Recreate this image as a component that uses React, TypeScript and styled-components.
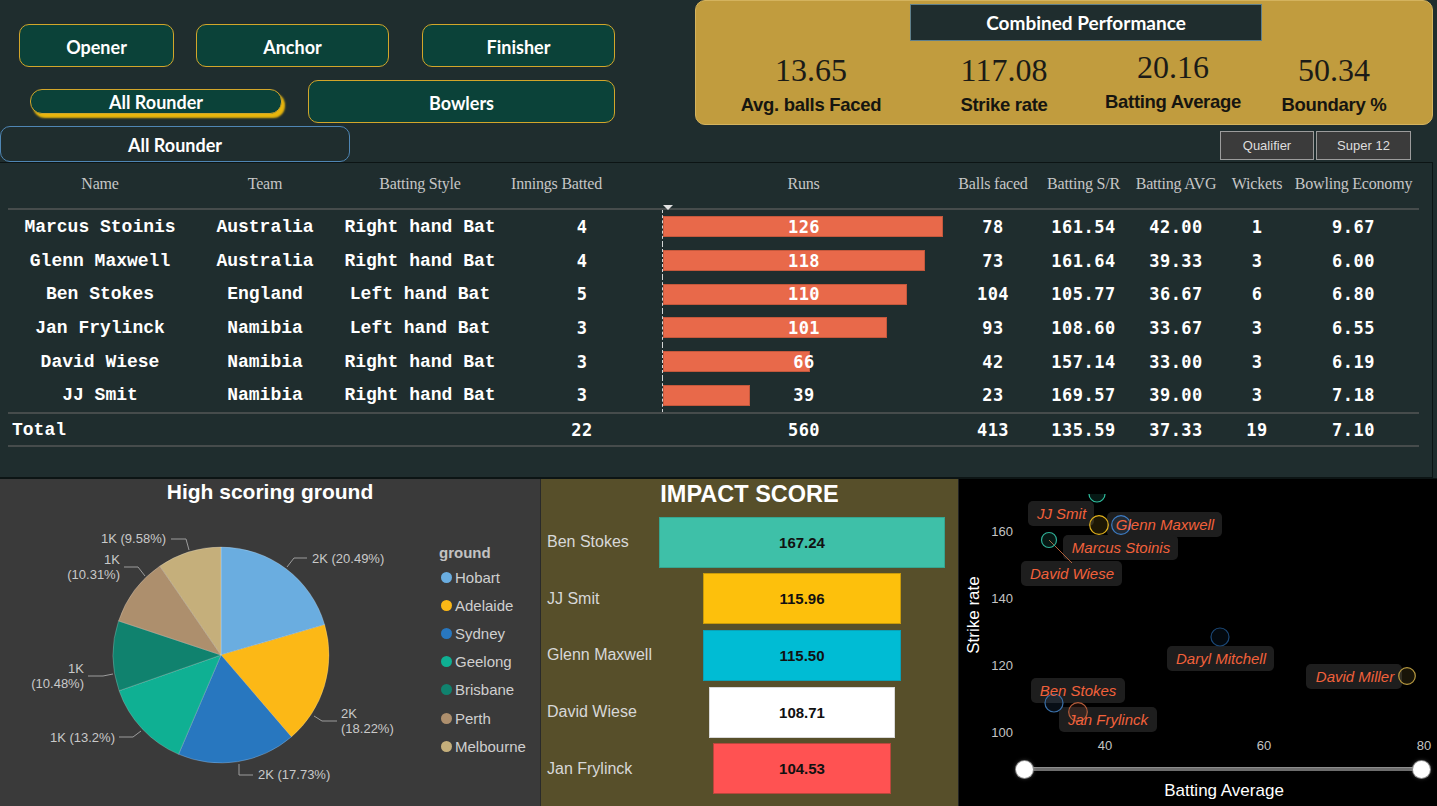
import React from "react";
import styled, { createGlobalStyle } from "styled-components";

const Global = createGlobalStyle`
  html, body { margin: 0; padding: 0; background: #1f2d2e; }
  body { width: 1437px; height: 806px; overflow: hidden; font-family: "Liberation Sans", Arial, sans-serif; }
  * { box-sizing: border-box; }
`;

const Page = styled.div`
  width: 1437px;
  height: 806px;
  display: grid;
  grid-template-rows: 162px 316px 328px;
  background: #1f2d2e;
`;

/* ---------- top ---------- */
const Top = styled.header`
  display: flex;
`;

const Roles = styled.div`
  width: 695px;
  display: flex;
  flex-direction: column;
`;

const RoleRow = styled.div<{ $mt: number; $h: number }>`
  display: flex;
  align-items: center;
  margin-top: ${(p) => p.$mt}px;
  height: ${(p) => p.$h}px;
`;

type Variant = "gold" | "glow" | "blue";

const RoleButton = styled.button<{ $w: number; $h: number; $ml: number; $v: Variant }>`
  width: ${(p) => p.$w}px;
  height: ${(p) => p.$h}px;
  margin-left: ${(p) => p.$ml}px;
  padding: ${(p) => (p.$v === "gold" ? 3 : 1)}px 0 0;
  font-family: Lato, "Open Sans", sans-serif;
  font-weight: 700;
  font-size: 18px;
  color: #fff;
  background: ${(p) => (p.$v === "blue" ? "#1f2d2e" : "#0b4239")};
  border: 1px solid ${(p) => (p.$v === "blue" ? "#4f86b4" : "#d2a62a")};
  border-radius: ${(p) => (p.$v === "glow" ? 12 : 10)}px;
  box-shadow: ${(p) => (p.$v === "glow" ? "3px 4px 2px #e8b60c" : "none")};
  display: flex;
  align-items: center;
  justify-content: center;
`;

const RightTop = styled.div`
  width: 742px;
  display: flex;
  flex-direction: column;
`;

const Card = styled.section`
  width: 738px;
  height: 125px;
  background: #c19c3e;
  border: 1px solid #d4b35e;
  border-radius: 10px;
  display: flex;
  flex-direction: column;
`;

const CardTitle = styled.div`
  margin: 3px 0 0 214px;
  width: 352px;
  height: 37px;
  background: #1f2d2e;
  border: 1px solid #60808b;
  color: #fff;
  font-family: Lato, "Open Sans", sans-serif;
  font-weight: 700;
  font-size: 19px;
  display: flex;
  align-items: center;
  justify-content: center;
`;

const KpiGrid = styled.div`
  display: grid;
  grid-template-columns: 172px 214px 124px 198px;
  padding-left: 29px;
  margin-top: 13px;
`;

const Kpi = styled.div<{ $shift: number }>`
  display: flex;
  flex-direction: column;
  align-items: center;
  margin-top: ${(p) => p.$shift}px;
`;

const KpiValue = styled.div`
  font-family: "Liberation Serif", "Times New Roman", serif;
  font-size: 32px;
  line-height: 32px;
  color: #1b1b17;
`;

const KpiLabel = styled.div`
  margin-top: 9px;
  font-family: "Liberation Sans", Arial, sans-serif;
  font-weight: 700;
  font-size: 18.5px;
  letter-spacing: -0.3px;
  line-height: 20px;
  color: #161510;
  white-space: nowrap;
`;

const Tabs = styled.div`
  display: flex;
  justify-content: flex-end;
  gap: 2px;
  padding-right: 26px;
  margin-top: 6px;
`;

const Tab = styled.button<{ $w: number }>`
  width: ${(p) => p.$w}px;
  height: 29px;
  padding: 0;
  background: #3b3b3b;
  border: 1px solid #9c9c9c;
  color: #dedede;
  font-family: "Liberation Sans", Arial, sans-serif;
  font-size: 13px;
`;

/* ---------- table ---------- */
const cols = "184px 146px 164px 160px 283px 96px 85px 100px 62px 131px";

const TableBox = styled.section`
  width: 1433px;
  border-top: 1px solid #0c1414;
  border-right: 1px solid #0c1414;
  border-bottom: 1px solid #0c1414;
  padding-left: 8px;
  display: flex;
  flex-direction: column;
`;

const HeadRow = styled.div`
  display: grid;
  grid-template-columns: ${cols};
  height: 45px;
  padding-bottom: 4px;
  align-items: center;
  font-family: "Liberation Serif", "Times New Roman", serif;
  font-size: 16px;
  letter-spacing: -0.2px;
  color: #c6c6c6;
`;

const HeadCell = styled.div<{ $left?: boolean }>`
  position: relative;
  text-align: ${(p) => (p.$left ? "left" : "center")};
  padding-left: ${(p) => (p.$left ? 9 : 0)}px;
  white-space: nowrap;
`;

const SortArrow = styled.span`
  position: absolute;
  left: 1px;
  top: 30px;
  width: 0;
  height: 0;
  border-left: 5px solid transparent;
  border-right: 5px solid transparent;
  border-top: 5px solid #e2e2e2;
`;

const Rule = styled.div`
  width: 1411px;
  height: 2px;
  background: #464c4c;
`;

const BodyRow = styled.div<{ $h: number }>`
  display: grid;
  grid-template-columns: ${cols};
  height: ${(p) => p.$h}px;
  align-items: center;
  color: #fff;
`;

const TextCell = styled.div<{ $left?: boolean }>`
  font-family: "Liberation Mono", "Courier New", monospace;
  font-weight: 700;
  font-size: 18px;
  text-align: ${(p) => (p.$left ? "left" : "center")};
  padding-left: ${(p) => (p.$left ? 4 : 0)}px;
  white-space: nowrap;
`;

const NumCell = styled.div`
  font-family: "DejaVu Sans Mono", "Liberation Mono", monospace;
  font-weight: 700;
  font-size: 17px;
  letter-spacing: 0.5px;
  text-align: center;
  white-space: nowrap;
`;

const RunsCell = styled.div<{ $axis: boolean }>`
  height: 100%;
  display: grid;
  align-items: center;
  border-left: 1px ${(p) => (p.$axis ? "dashed rgba(255,255,255,0.8)" : "solid transparent")};
`;

const RunsBar = styled.div`
  grid-area: 1 / 1;
  justify-self: start;
  height: 21px;
  background: #e8694a;
  border: 1px solid #c4583c;
`;

const RunsText = styled(NumCell)`
  grid-area: 1 / 1;
  justify-self: center;
  position: relative;
`;

/* ---------- bottom ---------- */
const Bottom = styled.div`
  display: grid;
  grid-template-columns: 541px 417px 479px;
  border-top: 1px solid #0c1414;
`;

const PiePanel = styled.section`
  background: #3a3a3a;
  display: flex;
  flex-direction: column;
  border-right: 1px solid #2a2a2a;
`;

const PanelTitle = styled.h2<{ $size: number; $h: number; $pb: number }>`
  margin: 0;
  height: ${(p) => p.$h}px;
  padding-bottom: ${(p) => p.$pb}px;
  display: flex;
  align-items: center;
  justify-content: center;
  font-family: "Liberation Sans", Arial, sans-serif;
  font-weight: 700;
  font-size: ${(p) => p.$size}px;
  color: #fff;
`;

const PieBody = styled.div`
  display: flex;
`;

const Legend = styled.ul`
  margin: 0 0 0 9px;
  padding: 38px 0 0 0;
  list-style: none;
  font-family: "Liberation Sans", Arial, sans-serif;
`;

const LegendTitle = styled.li`
  height: 20px;
  line-height: 20px;
  font-weight: 700;
  font-size: 15px;
  color: #c2c2c2;
`;

const LegendItem = styled.li`
  height: 28.2px;
  display: flex;
  align-items: center;
  gap: 3px;
  font-size: 15px;
  color: #cfcfcf;
`;

const Dot = styled.span<{ $c: string }>`
  width: 11px;
  height: 11px;
  margin-left: 2px;
  border-radius: 50%;
  background: ${(p) => p.$c};
`;

const ImpactPanel = styled.section`
  background: #574f2a;
  display: flex;
  flex-direction: column;
`;

const ImpactRows = styled.div`
  display: grid;
  grid-auto-rows: 56.6px;
`;

const ImpactRow = styled.div`
  display: grid;
  grid-template-columns: 118px 286px;
  align-items: center;
`;

const ImpactName = styled.div`
  padding-left: 6px;
  font-family: "Liberation Sans", Arial, sans-serif;
  font-size: 16px;
  color: #d8d8d8;
  white-space: nowrap;
`;

const ImpactTrack = styled.div`
  display: flex;
  justify-content: center;
`;

const ImpactBar = styled.div<{ $c: string; $b: string }>`
  height: 51px;
  background: ${(p) => p.$c};
  border: 1px solid ${(p) => p.$b};
  display: flex;
  align-items: center;
  justify-content: center;
  font-family: "Liberation Sans", Arial, sans-serif;
  font-weight: 700;
  font-size: 15px;
  color: #111;
`;

const ScatterPanel = styled.section`
  background: #000;
  display: flex;
  flex-direction: column;
  border-left: 1px solid #222;
`;

const Slider = styled.div`
  height: 26px;
  margin-left: 57px;
  width: 414px;
  display: flex;
  align-items: center;
`;

const Thumb = styled.span`
  position: relative;
  z-index: 1;
  width: 17px;
  height: 17px;
  flex: none;
  border-radius: 50%;
  background: #fff;
  box-shadow: 0 0 0 1px #8a8a8a, 0 0 4px rgba(255, 255, 255, 0.35);
`;

const Track = styled.span`
  flex: 1;
  height: 4px;
  margin: 0 -8px;
  background: #6d6d6d;
  border-top: 1px solid #8d8d8d;
`;

const AxisTitle = styled.div`
  padding-left: 52px;
  margin-top: -2px;
  text-align: center;
  font-family: "Liberation Sans", Arial, sans-serif;
  font-size: 17px;
  line-height: 22px;
  color: #fff;
`;

/* ---------- data ---------- */
const players = [
  ["Marcus Stoinis", "Australia", "Right hand Bat", "4", 126, "78", "161.54", "42.00", "1", "9.67"],
  ["Glenn Maxwell", "Australia", "Right hand Bat", "4", 118, "73", "161.64", "39.33", "3", "6.00"],
  ["Ben Stokes", "England", "Left hand Bat", "5", 110, "104", "105.77", "36.67", "6", "6.80"],
  ["Jan Frylinck", "Namibia", "Left hand Bat", "3", 101, "93", "108.60", "33.67", "3", "6.55"],
  ["David Wiese", "Namibia", "Right hand Bat", "3", 66, "42", "157.14", "33.00", "3", "6.19"],
  ["JJ Smit", "Namibia", "Right hand Bat", "3", 39, "23", "169.57", "39.00", "3", "7.18"],
] as const;

const grounds = [
  { name: "Hobart", pct: 20.49, c: "#6aade0" },
  { name: "Adelaide", pct: 18.22, c: "#fcb816" },
  { name: "Sydney", pct: 17.73, c: "#2877bf" },
  { name: "Geelong", pct: 13.2, c: "#0fb093" },
  { name: "Brisbane", pct: 10.48, c: "#10826e" },
  { name: "Perth", pct: 10.31, c: "#ad8f6d" },
  { name: "Melbourne", pct: 9.58, c: "#c5af7b" },
];

const impact = [
  { name: "Ben Stokes", v: 167.24, c: "#3ec0a8", b: "#35a691" },
  { name: "JJ Smit", v: 115.96, c: "#fdc00c", b: "#c99a0b" },
  { name: "Glenn Maxwell", v: 115.5, c: "#00bcd4", b: "#0aa1b6" },
  { name: "David Wiese", v: 108.71, c: "#ffffff", b: "#d9d9d9" },
  { name: "Jan Frylinck", v: 104.53, c: "#ff5252", b: "#b9463c" },
];

const PieChart: React.FC = () => {
  const cx = 221;
  const cy = 150;
  const r = 108;
  let acc = 0;
  const total = grounds.reduce((s, g) => s + g.pct, 0);
  const pt = (a: number) => [cx + r * Math.sin(a), cy - r * Math.cos(a)];
  const slices = grounds.map((g) => {
    const a0 = (acc / total) * Math.PI * 2;
    acc += g.pct;
    const a1 = (acc / total) * Math.PI * 2;
    const [x0, y0] = pt(a0);
    const [x1, y1] = pt(a1);
    const large = a1 - a0 > Math.PI ? 1 : 0;
    return { d: `M${cx},${cy} L${x0},${y0} A${r},${r} 0 ${large} 1 ${x1},${y1} Z`, c: g.c };
  });
  const lab = { fontSize: 13, fill: "#c9c9c9", fontFamily: "Liberation Sans, Arial, sans-serif" };
  const lines = [
    "171,34 186,34 189,45",
    "124,62 138,62 145,71",
    "307,53 294,53 287,62",
    "88,171 103,171 113,169",
    "314,211 322,216 337,216",
    "119,232 133,232 141,226",
    "239,259 239,270 253,270",
  ];
  return (
    <svg width="430" height="301" viewBox="0 0 430 301">
      {slices.map((s, i) => (
        <path key={i} d={s.d} fill={s.c} stroke="rgba(255,255,255,0.35)" strokeWidth="0.6" />
      ))}
      {lines.map((p, i) => (
        <polyline key={i} points={p} fill="none" stroke="#9c9c9c" strokeWidth="1" />
      ))}
      <text x="101" y="38" {...lab}>1K (9.58%)</text>
      <text x="120" y="59" textAnchor="end" {...lab}>1K</text>
      <text x="120" y="74" textAnchor="end" {...lab}>(10.31%)</text>
      <text x="312" y="58" {...lab}>2K (20.49%)</text>
      <text x="84" y="168" textAnchor="end" {...lab}>1K</text>
      <text x="84" y="183" textAnchor="end" {...lab}>(10.48%)</text>
      <text x="341" y="213" {...lab}>2K</text>
      <text x="341" y="228" {...lab}>(18.22%)</text>
      <text x="115" y="237" textAnchor="end" {...lab}>1K (13.2%)</text>
      <text x="258" y="274" {...lab}>2K (17.73%)</text>
    </svg>
  );
};

const points = [
  { x: 138, y: 15, r: 8, c: "#2fbf9f" },
  { x: 140, y: 46, r: 9.3, c: "#e2b21c" },
  { x: 162, y: 46, r: 9.3, c: "#3d7cc4" },
  { x: 90, y: 61, r: 7.5, c: "#2fae96" },
  { x: 261, y: 158, r: 9, c: "#1b4877" },
  { x: 448, y: 197, r: 8.3, c: "#b89a40" },
  { x: 95, y: 224, r: 9, c: "#3a70a8" },
  { x: 119, y: 233, r: 9.3, c: "#b65c3a" },
];

const tags = [
  { t: "JJ Smit", x: 69, y: 22, w: 66, tx: 102.5 },
  { t: "Glenn Maxwell", x: 148, y: 33, w: 115, tx: 206 },
  { t: "Marcus Stoinis", x: 104, y: 56, w: 115, tx: 162 },
  { t: "David Wiese", x: 62, y: 82, w: 101, tx: 113 },
  { t: "Daryl Mitchell", x: 208, y: 167, w: 107, tx: 262 },
  { t: "David Miller", x: 347, y: 185, w: 96, tx: 396 },
  { t: "Ben Stokes", x: 72, y: 199, w: 94, tx: 119 },
  { t: "Jan Frylinck", x: 100, y: 228, w: 98, tx: 149 },
];

const Scatter: React.FC = () => {
  const tick = { fontSize: 13, fill: "#c4c4c4", fontFamily: "Liberation Sans, Arial, sans-serif" };
  return (
    <svg width="478" height="277" viewBox="0 0 478 277">
      <defs>
        <clipPath id="plot">
          <rect x="0" y="15" width="478" height="262" />
        </clipPath>
      </defs>
      <text
        transform="translate(20 136) rotate(-90)"
        textAnchor="middle"
        fontSize="17"
        fill="#fff"
        fontFamily="Liberation Sans, Arial, sans-serif"
      >
        Strike rate
      </text>
      {[
        ["160", 52],
        ["140", 119],
        ["120", 186],
        ["100", 253],
      ].map(([t, y]) => (
        <text key={t} x="54" y={Number(y) + 5} textAnchor="end" {...tick}>
          {t}
        </text>
      ))}
      {[
        ["40", 146],
        ["60", 305],
        ["80", 465],
      ].map(([t, x]) => (
        <text key={t} x={x} y="271" textAnchor="middle" {...tick}>
          {t}
        </text>
      ))}
      {tags.map((g) => (
        <rect key={g.t} x={g.x} y={g.y} width={g.w} height="25" rx="5" fill="#1e1e1e" />
      ))}
      <line x1="90" y1="61" x2="113" y2="84" stroke="#b0603a" strokeWidth="1" />
      <g clipPath="url(#plot)">
        {points.map((p, i) => (
          <circle key={i} cx={p.x} cy={p.y} r={p.r} fill={p.c} fillOpacity="0.13" stroke={p.c} strokeWidth="1.2" />
        ))}
      </g>
      {tags.map((g) => (
        <text
          key={g.t}
          x={g.tx}
          y={g.y + 18}
          textAnchor="middle"
          fontSize="15"
          fontStyle="italic"
          fill="#f2613b"
          fontFamily="Liberation Sans, Arial, sans-serif"
        >
          {g.t}
        </text>
      ))}
    </svg>
  );
};

export default function App() {
  const rowH = 33.7;
  return (
    <>
      <Global />
      <Page>
        <Top>
          <Roles>
            <RoleRow $mt={24} $h={43}>
              <RoleButton $v="gold" $w={155} $h={43} $ml={19}>Opener</RoleButton>
              <RoleButton $v="gold" $w={193} $h={43} $ml={22}>Anchor</RoleButton>
              <RoleButton $v="gold" $w={193} $h={43} $ml={33}>Finisher</RoleButton>
            </RoleRow>
            <RoleRow $mt={13} $h={43}>
              <RoleButton $v="glow" $w={252} $h={25} $ml={30}>All Rounder</RoleButton>
              <RoleButton $v="gold" $w={307} $h={43} $ml={26}>Bowlers</RoleButton>
            </RoleRow>
            <RoleRow $mt={3} $h={36}>
              <RoleButton $v="blue" $w={350} $h={36} $ml={0}>All Rounder</RoleButton>
            </RoleRow>
          </Roles>
          <RightTop>
            <Card>
              <CardTitle>Combined Performance</CardTitle>
              <KpiGrid>
                <Kpi $shift={0}>
                  <KpiValue>13.65</KpiValue>
                  <KpiLabel>Avg. balls Faced</KpiLabel>
                </Kpi>
                <Kpi $shift={0}>
                  <KpiValue>117.08</KpiValue>
                  <KpiLabel>Strike rate</KpiLabel>
                </Kpi>
                <Kpi $shift={-3}>
                  <KpiValue>20.16</KpiValue>
                  <KpiLabel>Batting Average</KpiLabel>
                </Kpi>
                <Kpi $shift={0}>
                  <KpiValue>50.34</KpiValue>
                  <KpiLabel>Boundary %</KpiLabel>
                </Kpi>
              </KpiGrid>
            </Card>
            <Tabs>
              <Tab $w={94}>Qualifier</Tab>
              <Tab $w={95}>Super 12</Tab>
            </Tabs>
          </RightTop>
        </Top>

        <TableBox>
          <HeadRow>
            <HeadCell>Name</HeadCell>
            <HeadCell>Team</HeadCell>
            <HeadCell>Batting Style</HeadCell>
            <HeadCell $left>Innings Batted</HeadCell>
            <HeadCell>
              Runs
              <SortArrow />
            </HeadCell>
            <HeadCell>Balls faced</HeadCell>
            <HeadCell>Batting S/R</HeadCell>
            <HeadCell>Batting AVG</HeadCell>
            <HeadCell>Wickets</HeadCell>
            <HeadCell>Bowling Economy</HeadCell>
          </HeadRow>
          <Rule />
          {players.map((p) => (
            <BodyRow key={p[0]} $h={rowH}>
              <TextCell>{p[0]}</TextCell>
              <TextCell>{p[1]}</TextCell>
              <TextCell>{p[2]}</TextCell>
              <NumCell>{p[3]}</NumCell>
              <RunsCell $axis>
                <RunsBar style={{ width: `${(p[4] / 126) * 280}px` }} />
                <RunsText>{p[4]}</RunsText>
              </RunsCell>
              <NumCell>{p[5]}</NumCell>
              <NumCell>{p[6]}</NumCell>
              <NumCell>{p[7]}</NumCell>
              <NumCell>{p[8]}</NumCell>
              <NumCell>{p[9]}</NumCell>
            </BodyRow>
          ))}
          <Rule />
          <BodyRow $h={31}>
            <TextCell $left>Total</TextCell>
            <span />
            <span />
            <NumCell>22</NumCell>
            <RunsCell $axis={false}>
              <RunsText>560</RunsText>
            </RunsCell>
            <NumCell>413</NumCell>
            <NumCell>135.59</NumCell>
            <NumCell>37.33</NumCell>
            <NumCell>19</NumCell>
            <NumCell>7.10</NumCell>
          </BodyRow>
          <Rule />
        </TableBox>

        <Bottom>
          <PiePanel>
            <PanelTitle $size={21} $h={26} $pb={0}>High scoring ground</PanelTitle>
            <PieBody>
              <PieChart />
              <Legend>
                <LegendTitle>ground</LegendTitle>
                {grounds.map((g) => (
                  <LegendItem key={g.name}>
                    <Dot $c={g.c} />
                    {g.name}
                  </LegendItem>
                ))}
              </Legend>
            </PieBody>
          </PiePanel>

          <ImpactPanel>
            <PanelTitle $size={23.5} $h={35} $pb={4}>IMPACT SCORE</PanelTitle>
            <ImpactRows>
              {impact.map((m) => (
                <ImpactRow key={m.name}>
                  <ImpactName>{m.name}</ImpactName>
                  <ImpactTrack>
                    <ImpactBar $c={m.c} $b={m.b} style={{ width: `${(m.v / 167.24) * 286}px` }}>
                      {m.v.toFixed(2)}
                    </ImpactBar>
                  </ImpactTrack>
                </ImpactRow>
              ))}
            </ImpactRows>
          </ImpactPanel>

          <ScatterPanel>
            <Scatter />
            <Slider>
              <Thumb />
              <Track />
              <Thumb />
            </Slider>
            <AxisTitle>Batting Average</AxisTitle>
          </ScatterPanel>
        </Bottom>
      </Page>
    </>
  );
}
